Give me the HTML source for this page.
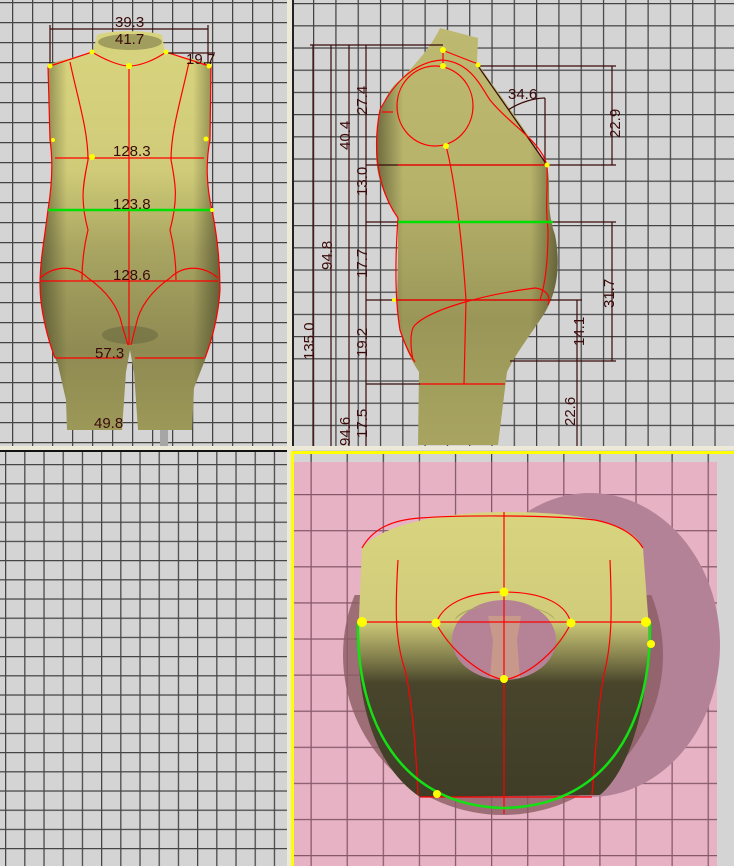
<!DOCTYPE html>
<html><head><meta charset="utf-8"><style>
html,body{margin:0;padding:0;background:#d4d4d4;}
svg{display:block;}
text{font-family:"Liberation Sans",sans-serif;font-size:15px;fill:#3a0a0a;}
</style></head><body>
<svg width="734" height="866" viewBox="0 0 734 866" xmlns="http://www.w3.org/2000/svg">
<defs>
<pattern id="g1" x="12" y="2" width="20" height="20" patternUnits="userSpaceOnUse"><path d="M0.5,0V20M0,0.5H20" stroke="#444" stroke-width="1.5" fill="none"/></pattern>
<pattern id="g2" x="313" y="3" width="22.3" height="22.2" patternUnits="userSpaceOnUse"><path d="M0.5,0V22.2M0,0.5H22.3" stroke="#444" stroke-width="1.5" fill="none"/></pattern>
<pattern id="g3" x="5" y="464" width="19.2" height="19.2" patternUnits="userSpaceOnUse"><path d="M0.5,0V19.2M0,0.5H19.2" stroke="#444" stroke-width="1.5" fill="none"/></pattern>
<pattern id="g4" x="310.5" y="494" width="36.1" height="36.1" patternUnits="userSpaceOnUse"><path d="M0.5,0V36.1M0,0.5H36.1" stroke="#85586a" stroke-width="1.5" fill="none"/></pattern>
<pattern id="g5" x="310.5" y="0" width="36.1" height="36.1" patternUnits="userSpaceOnUse"><path d="M0.5,0V36.1" stroke="#444" stroke-width="1.5" fill="none"/></pattern>
<clipPath id="lower"><rect x="290" y="595" width="444" height="271"/></clipPath>
<linearGradient id="bodyV" x1="0" y1="0" x2="0" y2="1">
<stop offset="0" stop-color="#d8d47e"/><stop offset="0.35" stop-color="#cfcb78"/><stop offset="0.55" stop-color="#a8a461"/><stop offset="0.8" stop-color="#8e8a52"/><stop offset="1" stop-color="#9c9858"/></linearGradient>
<linearGradient id="bodyH" x1="0" y1="0" x2="1" y2="0">
<stop offset="0" stop-color="#3a3820" stop-opacity="0.6"/><stop offset="0.15" stop-color="#3a3820" stop-opacity="0"/><stop offset="0.85" stop-color="#3a3820" stop-opacity="0"/><stop offset="1" stop-color="#3a3820" stop-opacity="0.6"/></linearGradient>
<linearGradient id="sideV" x1="0" y1="0" x2="0" y2="1">
<stop offset="0" stop-color="#bdb970"/><stop offset="0.4" stop-color="#b6b26a"/><stop offset="0.7" stop-color="#9a9658"/><stop offset="1" stop-color="#a8a460"/></linearGradient>
<linearGradient id="topV" x1="0" y1="0" x2="0" y2="1">
<stop offset="0" stop-color="#d8d47e"/><stop offset="0.38" stop-color="#d0cc7a"/><stop offset="0.5" stop-color="#8a8650"/><stop offset="0.6" stop-color="#48452c"/><stop offset="1" stop-color="#403d27"/></linearGradient>
</defs>

<rect x="0" y="0" width="287" height="446" fill="#d4d4d4"/>
<rect x="0" y="0" width="287" height="446" fill="url(#g1)"/>
<rect x="292" y="0" width="442" height="446" fill="url(#g2)"/>
<rect x="292" y="0" width="2" height="446" fill="#222"/>
<rect x="0" y="452" width="287" height="414" fill="url(#g3)"/>
<rect x="0" y="450" width="287" height="2" fill="#111"/>
<rect x="287" y="0" width="5" height="866" fill="#ece9d8"/>
<rect x="0" y="446" width="734" height="4" fill="#ece9d8"/>
<rect x="294" y="453" width="440" height="413" fill="#d4d4d4"/>
<rect x="294" y="453" width="440" height="10" fill="url(#g5)"/>
<rect x="294" y="462" width="423" height="404" fill="#e6b2c4"/>
<rect x="294" y="462" width="423" height="404" fill="url(#g4)"/>
<rect x="291" y="451" width="443" height="3" fill="#ffff00"/>
<rect x="291" y="451" width="3" height="415" fill="#ffff00"/>

<!-- FRONT VIEW -->
<rect x="160" y="428" width="8" height="18" fill="#a6a6a6"/>
<path d="M97,35 C110,30 150,30 162,35 L165,52 C185,58 205,60 211,66 L210,140 C206,160 206,185 212,210 C218,240 220,265 220,290 C218,320 210,345 205,360 L194,388 L192,430 L138,430 L134,372 L130,350 L126,372 L122,430 L67,430 L66,400 L58,365 C48,340 40,310 40,285 C40,260 45,235 48,210 C53,185 52,160 50,140 L48,66 C55,60 75,58 93,52 Z" fill="url(#bodyV)"/>
<path d="M97,35 C110,30 150,30 162,35 L165,52 C185,58 205,60 211,66 L210,140 C206,160 206,185 212,210 C218,240 220,265 220,290 C218,320 210,345 205,360 L194,388 L192,430 L138,430 L134,372 L130,350 L126,372 L122,430 L67,430 L66,400 L58,365 C48,340 40,310 40,285 C40,260 45,235 48,210 C53,185 52,160 50,140 L48,66 C55,60 75,58 93,52 Z" fill="url(#bodyH)"/>
<ellipse cx="130" cy="335" rx="28" ry="9" fill="#4a4830" opacity="0.3"/>
<ellipse cx="130" cy="42" rx="32" ry="8" fill="#6a6840" opacity="0.5"/>
<g fill="none" stroke="#ff0000" stroke-width="1.2">
<path d="M129,66 V345"/>
<path d="M50,66 L92,52 C105,60 120,66 129,66 C140,66 155,60 166,52 L209,66"/>
<path d="M70,62 C78,100 88,130 88,160 C83,185 80,200 88,230 C83,250 82,265 82,280"/>
<path d="M189,62 C181,100 171,130 171,160 C176,185 178,200 170,230 C175,250 176,265 176,280"/>
<path d="M55,158 H204"/>
<path d="M40,281 H218"/>
<path d="M55,358 H122 M135,358 H204"/>
<path d="M40,278 C55,265 75,265 88,278 C105,290 118,305 122,325 L128,345"/>
<path d="M218,278 C203,265 183,265 170,278 C153,290 140,305 136,325 L131,345"/>
<path d="M48,66 L50,140 C53,160 52,185 48,210 C45,235 40,260 40,285 C40,310 48,340 55,358"/>
<path d="M211,66 L210,140 C206,160 206,185 212,210 C218,240 220,265 220,290 C218,320 210,345 205,358"/>
</g>
<path d="M48,210 H212" stroke="#00e000" stroke-width="2.5"/>
<g stroke="#3a0a0a" stroke-width="1.2" fill="none"><path d="M50,29 H208 M50,25 V66 M208,25 V66 M166,53 H215"/></g>
<g fill="#ffff00"><circle cx="92" cy="52" r="2.5"/><circle cx="166" cy="52" r="2.5"/><circle cx="129" cy="66" r="3"/><circle cx="50" cy="66" r="2.5"/><circle cx="209" cy="66" r="2.5"/><circle cx="53" cy="140" r="2"/><circle cx="206" cy="139" r="2.5"/><circle cx="92" cy="157" r="3"/><circle cx="212" cy="210" r="2"/></g>
<text x="115" y="27">39.3</text>
<text x="115" y="44">41.7</text>
<text x="186" y="64">19.7</text>
<text x="113" y="156">128.3</text>
<text x="113" y="209">123.8</text>
<text x="113" y="280">128.6</text>
<text x="95" y="358">57.3</text>
<text x="94" y="428">49.8</text>

<!-- SIDE VIEW -->
<path d="M440,28 L478,38 L477,62 C492,85 520,120 547,165 C552,190 545,205 555,235 C562,270 555,300 540,320 C528,338 515,355 507,372 L498,445 L418,445 L419,372 C408,355 398,335 397,300 C398,265 398,240 398,218 C386,200 376,180 376,150 C376,115 385,92 400,80 C418,62 432,45 440,28 Z" fill="url(#sideV)"/>
<path d="M440,28 L478,38 L477,62 C492,85 520,120 547,165 C552,190 545,205 555,235 C562,270 555,300 540,320 C528,338 515,355 507,372 L498,445 L418,445 L419,372 C408,355 398,335 397,300 C398,265 398,240 398,218 C386,200 376,180 376,150 C376,115 385,92 400,80 C418,62 432,45 440,28 Z" fill="url(#bodyH)"/>
<g stroke="#3a0a0a" stroke-width="1.2" fill="none">
<path d="M310,45 H443 M313,45 V446 M331,45 V446 M349,45 V446 M366,45 V446"/>
<path d="M366,165 H547 M366,222 H616 M366,300 H582 M366,384 H420 M478,66 H616 M547,165 H616 M510,361 H616"/>
<path d="M612,66 V165 M612,222 V361 M577,300 V446 M545,98 V165"/>
<path d="M478,66 L547,165 M508,110 C520,102 535,98 545,98"/>
</g>
<g fill="none" stroke="#ff0000" stroke-width="1.2">
<ellipse cx="435" cy="106" rx="38" ry="40"/>
<path d="M442,50 L478,64"/>
<path d="M443,50 V66"/>
<path d="M393,112 L382,112"/>
<path d="M442,60 C410,62 390,90 380,110 C372,150 378,190 398,218"/>
<path d="M442,60 C470,62 480,85 490,100 C510,125 540,140 547,165 C548,190 545,205 548,230 C548,260 545,285 540,300"/>
<path d="M446,146 C455,180 462,240 466,300 L464,384"/>
<path d="M398,165 H547 M395,300 H550 M420,384 H505"/>
<path d="M415,325 C430,310 480,295 535,288 C550,290 550,300 548,305 M415,325 C410,330 410,345 413,360"/>
<path d="M398,218 C395,260 395,300 400,330 C405,345 410,355 415,362"/>
</g>
<path d="M398,222 H553" stroke="#00e000" stroke-width="2.5"/>
<g fill="#ffff00"><circle cx="443" cy="50" r="3"/><circle cx="443" cy="66" r="3"/><circle cx="478" cy="65" r="2.5"/><circle cx="446" cy="146" r="3"/><circle cx="547" cy="165" r="2.5"/><circle cx="394" cy="300" r="2"/></g>
<text transform="translate(314,360) rotate(-90)">135.0</text>
<text transform="translate(332,270) rotate(-90)">94.8</text>
<text transform="translate(350,150) rotate(-90)">40.4</text>
<text transform="translate(367,115) rotate(-90)">27.4</text>
<text transform="translate(367,196) rotate(-90)">13.0</text>
<text transform="translate(367,278) rotate(-90)">17.7</text>
<text transform="translate(367,357) rotate(-90)">19.2</text>
<text transform="translate(367,438) rotate(-90)">17.5</text>
<text transform="translate(350,446) rotate(-90)">94.6</text>
<text transform="translate(620,138) rotate(-90)">22.9</text>
<text transform="translate(614,308) rotate(-90)">31.7</text>
<text transform="translate(584,346) rotate(-90)">14.1</text>
<text transform="translate(575,426) rotate(-90)">22.6</text>
<text x="508" y="99">34.6</text>

<!-- TOP VIEW -->
<ellipse cx="590" cy="645" rx="130" ry="152" fill="#b48296"/>
<ellipse cx="503" cy="655" rx="160" ry="160" fill="#8c5c64" opacity="0.8" clip-path="url(#lower)"/>
<path d="M362,548 C385,522 450,512 505,512 C570,512 632,520 643,548 L648,615 C652,700 630,770 600,795 L420,797 C380,770 358,715 358,640 Z" fill="url(#topV)"/>
<ellipse cx="504" cy="640" rx="52" ry="40" fill="#b58296"/>
<path d="M455,620 C470,600 540,600 555,620 C548,600 460,600 455,620 Z" fill="#aaa660"/>
<path d="M488,616 L521,616 L517,640 L520,678 L490,678 L493,640 Z" fill="#c8988a"/>
<g fill="none" stroke="#ff0000" stroke-width="1.2">
<path d="M504,512 V814"/>
<path d="M360,622 H648"/>
<path d="M436,623 C445,600 475,592 504,592 C535,592 565,600 571,623"/>
<path d="M436,623 C450,650 480,675 504,680 C530,675 558,650 571,623"/>
<path d="M398,560 C395,610 395,640 405,670 C412,700 416,750 418,795"/>
<path d="M610,560 C612,610 612,640 605,670 C598,700 596,750 592,795"/>
<path d="M362,548 C372,530 390,520 420,518 C460,515 550,515 595,520 C620,525 635,535 643,548"/>
<path d="M420,797 H592"/>
</g>
<path d="M358,622 C356,720 400,806 504,808 C610,806 652,720 650,622" fill="none" stroke="#14e014" stroke-width="2.5"/>
<g fill="#ffff00"><circle cx="362" cy="622" r="5"/><circle cx="436" cy="623" r="4.5"/><circle cx="504" cy="592" r="4.5"/><circle cx="571" cy="623" r="4.5"/><circle cx="646" cy="622" r="5"/><circle cx="651" cy="644" r="4"/><circle cx="504" cy="679" r="4"/><circle cx="437" cy="794" r="4"/></g>
</svg>
</body></html>
